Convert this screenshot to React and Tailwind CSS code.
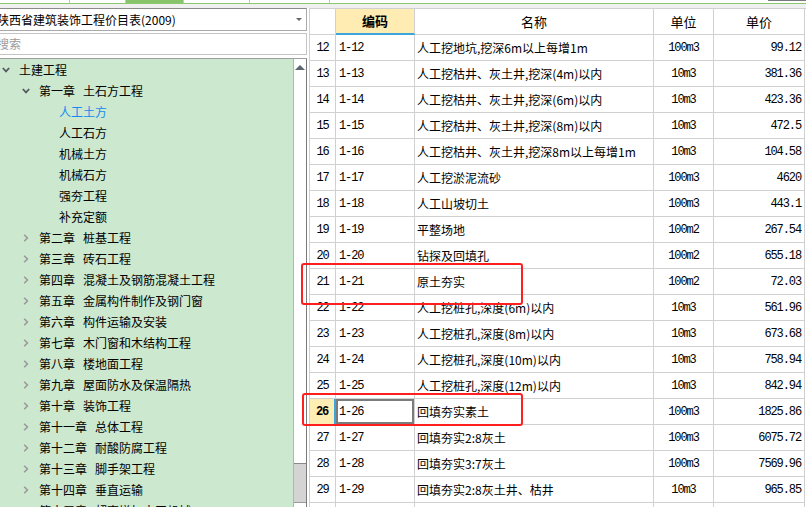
import React from "react";

const tree = [
  { level: 0, text: "土建工程", open: true },
  { level: 1, text: "第一章", sub: "土石方工程", open: true },
  { level: 2, text: "人工土方", selected: true },
  { level: 2, text: "人工石方" },
  { level: 2, text: "机械土方" },
  { level: 2, text: "机械石方" },
  { level: 2, text: "强夯工程" },
  { level: 2, text: "补充定额" },
  { level: 1, text: "第二章", sub: "桩基工程" },
  { level: 1, text: "第三章", sub: "砖石工程" },
  { level: 1, text: "第四章", sub: "混凝土及钢筋混凝土工程" },
  { level: 1, text: "第五章", sub: "金属构件制作及钢门窗" },
  { level: 1, text: "第六章", sub: "构件运输及安装" },
  { level: 1, text: "第七章", sub: "木门窗和木结构工程" },
  { level: 1, text: "第八章", sub: "楼地面工程" },
  { level: 1, text: "第九章", sub: "屋面防水及保温隔热" },
  { level: 1, text: "第十章", sub: "装饰工程" },
  { level: 1, text: "第十一章", sub: "总体工程" },
  { level: 1, text: "第十二章", sub: "耐酸防腐工程" },
  { level: 1, text: "第十三章", sub: "脚手架工程" },
  { level: 1, text: "第十四章", sub: "垂直运输" },
  { level: 1, text: "第十五章", sub: "超高增加人工机械" },
];

const rows = [
  [12, "1-12", "人工挖地坑,挖深6m以上每增1m", "100m3", "99.12"],
  [13, "1-13", "人工挖枯井、灰土井,挖深(4m)以内", "10m3", "381.36"],
  [14, "1-14", "人工挖枯井、灰土井,挖深(6m)以内", "10m3", "423.36"],
  [15, "1-15", "人工挖枯井、灰土井,挖深(8m)以内", "10m3", "472.5"],
  [16, "1-16", "人工挖枯井、灰土井,挖深8m以上每增1m", "10m3", "104.58"],
  [17, "1-17", "人工挖淤泥流砂", "100m3", "4620"],
  [18, "1-18", "人工山坡切土", "100m3", "443.1"],
  [19, "1-19", "平整场地", "100m2", "267.54"],
  [20, "1-20", "钻探及回填孔", "100m2", "655.18"],
  [21, "1-21", "原土夯实", "100m2", "72.03"],
  [22, "1-22", "人工挖桩孔,深度(6m)以内", "10m3", "561.96"],
  [23, "1-23", "人工挖桩孔,深度(8m)以内", "10m3", "673.68"],
  [24, "1-24", "人工挖桩孔,深度(10m)以内", "10m3", "758.94"],
  [25, "1-25", "人工挖桩孔,深度(12m)以内", "10m3", "842.94"],
  [26, "1-26", "回填夯实素土", "100m3", "1825.86"],
  [27, "1-27", "回填夯实2:8灰土", "100m3", "6075.72"],
  [28, "1-28", "回填夯实3:7灰土", "100m3", "7569.96"],
  [29, "1-29", "回填夯实2:8灰土井、枯井", "10m3", "965.85"],
  [30, "1-30", "", "", ""],
];

const mono = "font-['Liberation_Mono',monospace] text-[12px] tracking-[-1.1px]";

const ChevronDown = () => (
  <svg width="8" height="6" viewBox="0 0 8 6">
    <path d="M0.8 1 L4 4.4 L7.2 1" stroke="#555a60" strokeWidth="1.8" fill="none" />
  </svg>
);

const ChevronRight = () => (
  <svg width="6" height="8" viewBox="0 0 6 8">
    <path d="M1.2 0.8 L4.4 4 L1.2 7.2" stroke="#9a9a9a" strokeWidth="1.6" fill="none" />
  </svg>
);

const TreeRow = ({ item }) => {
  const pad = item.level === 0 ? "pl-[2px]" : item.level === 1 ? "pl-[22px]" : "pl-[59px]";
  return (
    <div className={`flex items-center h-[21px] whitespace-nowrap ${pad}`}>
      {item.level < 2 && (
        <span className="w-[17px] flex items-center">
          {item.open ? <ChevronDown /> : <span className="ml-[1px] flex"><ChevronRight /></span>}
        </span>
      )}
      <span className={item.selected ? "text-[#1689f0]" : "text-black"}>{item.text}</span>
      {item.sub && <span className="ml-[8px]">{item.sub}</span>}
    </div>
  );
};

const LeftPanel = () => (
  <div className="flex flex-col w-[307px] h-full">
    <div className="relative h-[23px] bg-white border border-l-0 border-[#a9a9a9] border-t-[#8a8a8a] flex items-center overflow-hidden">
      <span className="-ml-[3px] text-[12px] whitespace-nowrap">陕西省建筑装饰工程价目表(2009)</span>
      <span className="absolute right-[4px] top-[9px] w-0 h-0 border-l-[3px] border-r-[3px] border-t-[3px] border-l-transparent border-r-transparent border-t-[#666]" />
    </div>
    <div className="mt-[2px] h-[22px] bg-white border border-l-0 border-[#c4c4c4] flex items-center overflow-hidden">
      <span className="-ml-[3px] text-[12px] text-[#9a9a9a]">搜索</span>
    </div>
    <div className="mt-[3px] flex-1 flex bg-[#cce8cf] border-t border-[#a0a0a0] overflow-hidden">
      <div className="flex-1 text-[12px] overflow-hidden">
        {tree.map((t, i) => (
          <TreeRow key={i} item={t} />
        ))}
      </div>
      <div className="w-[14px] flex flex-col bg-white border-l border-[#b4b4b4] border-r border-r-[#7a7a7a] shrink-0">
        <div className="h-[16px] shrink-0 flex justify-center pt-[6px]">
          <span className="w-0 h-0 border-l-[5px] border-r-[5px] border-b-[5px] border-l-transparent border-r-transparent border-b-[#5d6670]" />
        </div>
        <div className="h-[389px] shrink-0 bg-white border-b border-[#8a8a8a]" />
        <div className="h-[38px] shrink-0 bg-[#d4d4d4]" />
        <div className="h-[16px] shrink-0 bg-white border-t border-[#9a9a9a] flex justify-center pt-[4px]">
          <span className="w-0 h-0 border-l-[5px] border-r-[5px] border-t-[5px] border-l-transparent border-r-transparent border-t-[#5d6670]" />
        </div>
      </div>
    </div>
  </div>
);

const cols = "grid grid-cols-[26px_79px_239px_60px_91px]";
const cell = "h-[26px] border-r border-b border-[#d0d0d0] flex items-center overflow-hidden whitespace-nowrap";

const Table = () => (
  <div className="ml-[2px] w-[497px] h-full border-t border-l border-[#d0d0d0] overflow-hidden bg-white">
    <div className={`${cols} text-[13px]`}>
      <div className={cell} />
      <div className={`${cell} justify-center bg-[#ffecb3] font-bold border-b-2 border-b-[#3ba5dc]`}>编码</div>
      <div className={`${cell} justify-center`}>名称</div>
      <div className={`${cell} justify-center`}>单位</div>
      <div className={`${cell} justify-center`}>单价</div>
    </div>
    {rows.map(([n, code, name, unit, price]) => {
      const sel = n === 26;
      return (
        <div key={n} className={cols}>
          <div
            className={`${cell} justify-center ${mono} ${
              sel ? "bg-[#ffeeb3] font-bold border-r-2 border-r-[#3ba5dc]" : ""
            }`}
          >
            {n}
          </div>
          <div className={`${cell} pl-[3px] ${mono} ${sel ? "shadow-[inset_0_0_0_2px_#7c7c7c]" : ""}`}>{code}</div>
          <div className={`${cell} pl-[2px] text-[12px]`}>{name}</div>
          <div className={`${cell} justify-center ${mono}`}>{unit}</div>
          <div className={`${cell} justify-end pr-[3px] ${mono}`}>{price}</div>
        </div>
      );
    })}
  </div>
);

const TopStrip = () => (
  <div className="h-[8px] flex flex-col">
    <div className="h-[3px] flex bg-white">
      <div className="w-[70px] border-r border-[#c8c8c8]" />
      <div className="w-[56px] border-r border-[#c8c8c8]" />
      <div className="w-[57px] bg-[#88c46c]" />
      <div className="w-[67px] border-l border-r border-[#c8c8c8]" />
      <div className="w-[80px] border-r border-[#c8c8c8]" />
      <div className="flex-1" />
      <div className="w-[38px] border-t border-[#7a7a7a]" />
    </div>
    <div className="h-[1px] bg-[#8cc870]" />
    <div className="h-[4px] bg-[#f0f0f0]" />
  </div>
);

export default function App() {
  return (
    <div className="relative w-[806px] h-[507px] overflow-hidden bg-white text-black font-['Noto_Sans_CJK_SC',sans-serif]">
      <TopStrip />
      <div className="flex h-[499px]">
        <LeftPanel />
        <Table />
      </div>
      <div className="absolute left-[301px] top-[263px] w-[222px] h-[42px] border-2 border-[#ff1f1f] rounded-[3px]" />
      <div className="absolute left-[302px] top-[393px] w-[221px] h-[33px] border-2 border-[#ff1f1f] rounded-[3px]" />
    </div>
  );
}
